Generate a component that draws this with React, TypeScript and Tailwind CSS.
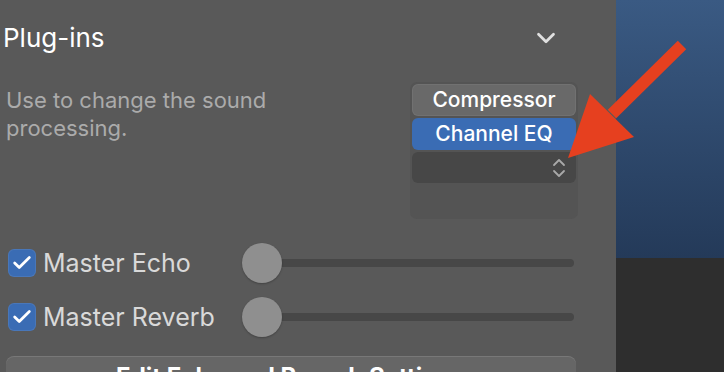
import { Check, ChevronDown } from 'lucide-react';

const font = { fontFamily: 'Inter, "Noto Sans", sans-serif' };

function Checkbox() {
  return (
    <div className="flex h-[28px] w-[28px] items-center justify-center rounded-[6px] bg-[#3a6cb4] shadow-[inset_0_0_0_1px_rgba(255,255,255,0.08)]">
      <Check size={22} strokeWidth={3} color="#ffffff" />
    </div>
  );
}

function SliderRow({ label }: { label: string }) {
  return (
    <div className="flex h-[40px] items-center">
      <div className="ml-[8px] flex w-[234px] items-center gap-[7px]">
        <Checkbox />
        <span className="text-[25px] leading-none text-[#d9d9d9]">{label}</span>
      </div>
      <div className="relative flex h-[40px] w-[332px] items-center">
        <div className="h-[8px] w-full rounded-full bg-[#474747]" />
        <div className="absolute left-0 top-0 h-[40px] w-[40px] rounded-full bg-[#8f8f8f] shadow-[0_1px_2px_rgba(0,0,0,0.25)]" />
      </div>
    </div>
  );
}

function PluginList() {
  return (
    <div className="mr-[38px] mt-[-4px] flex h-[137px] w-[168px] flex-col gap-[2px] rounded-[7px] bg-[#545454] p-[2px]">
      <div className="flex h-[32px] items-center justify-center rounded-[6px] bg-[#696969] text-[21px] font-medium text-white shadow-[inset_0_0_0_1px_rgba(255,255,255,0.06)]">
        Compressor
      </div>
      <div className="flex h-[32px] items-center justify-center rounded-[6px] bg-[#3a6cb4] text-[21px] font-medium text-white">
        Channel EQ
      </div>
      <div className="flex h-[31px] items-center justify-end rounded-[6px] bg-[#474747] pr-[10px]">
        <svg width="14" height="22" viewBox="0 0 14 22" fill="none" stroke="#a9a9a9" strokeWidth="1.8" strokeLinecap="round" strokeLinejoin="round">
          <path d="M2 8 L7 3 L12 8" />
          <path d="M2 14 L7 19 L12 14" />
        </svg>
      </div>
    </div>
  );
}

export default function App() {
  return (
    <div className="relative flex h-[372px] w-[724px] overflow-hidden" style={font}>
      <div className="flex w-[616px] flex-col bg-[#595959]">
        <div className="mt-[22px] flex items-center justify-between">
          <span className="ml-[3px] text-[26px] leading-[32px] text-white">Plug-ins</span>
          <ChevronDown className="mr-[55px]" size={30} strokeWidth={2.2} color="#e0e0e0" />
        </div>
        <div className="mt-[32px] flex items-start justify-between">
          <p className="ml-[6px] w-[300px] text-[22px] leading-[28px] text-[#ababab]">
            Use to change the sound processing.
          </p>
          <PluginList />
        </div>
        <div className="mt-[24px] flex flex-col gap-[14px]">
          <SliderRow label="Master Echo" />
          <SliderRow label="Master Reverb" />
        </div>
        <div className="ml-[6px] mt-[19px] flex h-[40px] w-[570px] justify-center rounded-t-[8px] bg-[#666666] pt-[9px] shadow-[inset_0_1px_0_rgba(255,255,255,0.12)]">
          <span className="text-[24px] font-bold leading-none text-white">Edit Echo and Reverb Settings</span>
        </div>
      </div>
      <div className="flex flex-1 flex-col shadow-[inset_6px_0_8px_-4px_rgba(0,0,0,0.45)]">
        <div className="h-[258px] bg-gradient-to-b from-[#3a5a83] to-[#243a59]" />
        <div className="flex-1 bg-[#2e2e2e]" />
      </div>
      <svg className="absolute left-0 top-0" width="724" height="372" viewBox="0 0 724 372">
        <line x1="682" y1="45" x2="612" y2="114" stroke="#e6401f" strokeWidth="12" strokeLinecap="butt" />
        <polygon points="568,158 590,94 634,137" fill="#e6401f" />
      </svg>
    </div>
  );
}
